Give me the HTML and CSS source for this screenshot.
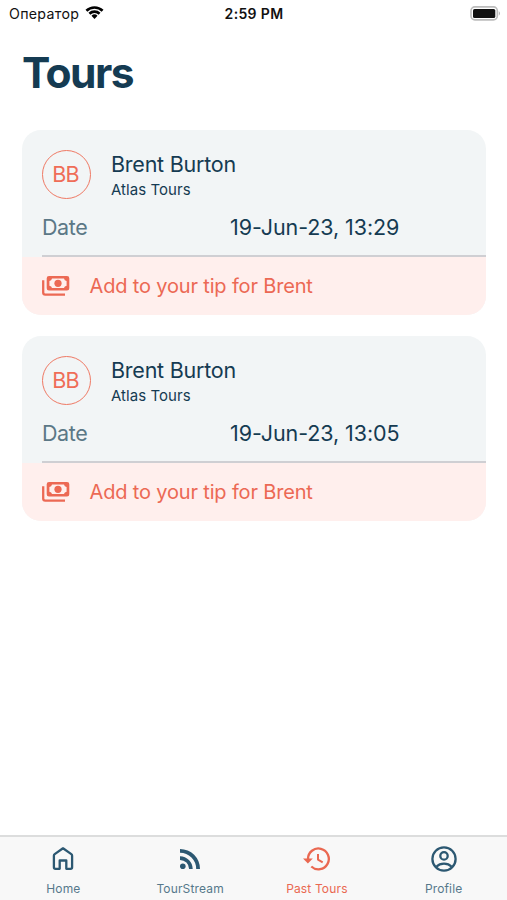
FILE: index.html
```html
<!DOCTYPE html>
<html lang="en">
<head>
<meta charset="utf-8">
<title>Tours</title>
<link rel="stylesheet" href="styles.css">
</head>
<body>
<header class="status">
  <div class="carrier"><span class="carrier-name">Оператор</span>
    <svg class="wifi" viewBox="0 0 18 14" width="19" height="14.5"><path d="M0.3 4.6 A12.6 12.6 0 0 1 17.7 4.6 L15.9 6.4 A10 10 0 0 0 2.1 6.4Z"/><path d="M3.2 7.5 A8.4 8.4 0 0 1 14.8 7.5 L13 9.3 A5.9 5.9 0 0 0 5 9.3Z"/><path d="M6.1 10.4 A4.2 4.2 0 0 1 11.9 10.4 L9 13.4Z"/></svg>
  </div>
  <time class="clock">2:59 PM</time>
  <svg class="battery" viewBox="0 0 31 15" width="31" height="15"><rect x="1" y=".9" width="26.3" height="13" rx="3.8" fill="#fff" stroke="#bcbcbc" stroke-width="1.6"/><rect x="3" y="3" width="22.3" height="9" rx="1.6"/><path d="M28.8 5 Q31 7.4 28.8 9.8Z" fill="#aaa"/></svg>
</header>
<main>
  <h1>Tours</h1>
  <article class="card">
    <div class="guide">
      <div class="avatar">BB</div>
      <div class="who"><div class="name">Brent Burton</div><div class="company">Atlas Tours</div></div>
    </div>
    <div class="date"><span class="label">Date</span><span class="value">19-Jun-23, 13:29</span></div>
    <div class="divider"></div>
    <div class="tip">
      <svg viewBox="0 0 28 20" width="28" height="20"><path class="line" d="M1.2 4.2V16.5Q1.2 18.6 3.3 18.6H23"/><path fill-rule="evenodd" d="M7 0H25Q27.3 0 27.3 2.3V12.3Q27.3 14.6 25 14.6H7Q4.7 14.6 4.7 12.3V2.3Q4.7 0 7 0ZM10 2.5Q9.6 4.6 7.4 4.9V9.7Q9.6 10 10 12.1H22Q22.4 10 24.6 9.7V4.9Q22.4 4.6 22 2.5Z"/><circle cx="16" cy="7.3" r="3.6"/></svg>
      <span>Add to your tip for Brent</span>
    </div>
  </article>
  <article class="card">
    <div class="guide">
      <div class="avatar">BB</div>
      <div class="who"><div class="name">Brent Burton</div><div class="company">Atlas Tours</div></div>
    </div>
    <div class="date"><span class="label">Date</span><span class="value">19-Jun-23, 13:05</span></div>
    <div class="divider"></div>
    <div class="tip">
      <svg viewBox="0 0 28 20" width="28" height="20"><path class="line" d="M1.2 4.2V16.5Q1.2 18.6 3.3 18.6H23"/><path fill-rule="evenodd" d="M7 0H25Q27.3 0 27.3 2.3V12.3Q27.3 14.6 25 14.6H7Q4.7 14.6 4.7 12.3V2.3Q4.7 0 7 0ZM10 2.5Q9.6 4.6 7.4 4.9V9.7Q9.6 10 10 12.1H22Q22.4 10 24.6 9.7V4.9Q22.4 4.6 22 2.5Z"/><circle cx="16" cy="7.3" r="3.6"/></svg>
      <span>Add to your tip for Brent</span>
    </div>
  </article>
</main>
<nav class="tabs">
  <a class="tab"><svg viewBox="0 0 28 28" width="28" height="28"><path class="line" d="M4.9 10.7Q4.9 9.7 5.7 9.1L14 3.3L22.3 9.1Q23.1 9.7 23.1 10.7V22.2Q23.1 23.8 21.5 23.8H17.3V15.5H10.7V23.8H6.5Q4.9 23.8 4.9 22.2Z"/></svg><span>Home</span></a>
  <a class="tab"><svg viewBox="0 0 28 28" width="28" height="28"><circle cx="6.8" cy="21.3" r="2.8"/><path d="M4 11.3A12.8 12.8 0 0 1 16.7 24H13.1A9.1 9.1 0 0 0 4 14.9Z"/><path d="M4 4A20 20 0 0 1 24 24H20.2A16.2 16.2 0 0 0 4 7.8Z"/></svg><span>TourStream</span></a>
  <a class="tab active"><svg viewBox="0 0 28 28" width="28" height="28"><path class="line" d="M5 15V14A10.4 10.4 0 1 1 8.3 21.5"/><path d="M0 13.4H9.8L4.9 18.6Z"/><path class="line thin" d="M15 9V14.6L19.7 17.3"/></svg><span>Past Tours</span></a>
  <a class="tab"><svg viewBox="0 0 28 28" width="28" height="28"><circle class="line" cx="14" cy="14" r="11.6"/><circle class="line" cx="14" cy="10.9" r="3.7"/><path class="line" d="M6.3 21.8Q9.4 18.7 14 18.7T21.7 21.8"/></svg><span>Profile</span></a>
</nav>
</body>
</html>
```
FILE: styles.css
```css
* { box-sizing: border-box; }
body { margin: 0; width: 507px; height: 900px; display: flex; flex-direction: column; background: #fff; color: #153b52; font-family: Inter, "Liberation Sans", sans-serif; overflow: hidden; white-space: nowrap; }
svg { display: block; flex: none; fill: currentColor; }
.line { fill: none; stroke: currentColor; stroke-width: 2.3; stroke-linejoin: round; }
.thin { stroke-width: 2; }
.status { height: 27px; display: grid; grid-template-columns: 1fr auto 1fr; align-items: center; padding: 0 6px 0 9px; color: #111; }
.carrier { display: flex; align-items: center; gap: 6px; }
.carrier-name { font-size: 14.2px; letter-spacing: .3px; }
.wifi { margin-top: -3px; color: #000; }
.clock { margin-right: 2px; font-size: 14px; font-weight: 600; letter-spacing: .35px; }
.battery { justify-self: end; margin-top: -1px; }
main { flex: 1; padding: 0 21px 0 22px; }
h1 { margin: 0; height: 103px; padding-top: 19px; font-size: 42.5px; line-height: 54px; font-weight: 700; letter-spacing: -1.55px; }
.card { height: 185px; margin-bottom: 21px; border-radius: 19px; overflow: hidden; background: #f2f5f6; }
.guide { display: flex; gap: 20px; height: 81px; padding: 20px 20px 0; }
.avatar { width: 49px; height: 49px; padding: 0 2px 2px 0; border: 1.5px solid #ef7964; border-radius: 50%; display: flex; align-items: center; justify-content: center; color: #ef6d58; font-size: 21.5px; letter-spacing: -.7px; }
.name { font-size: 21.5px; line-height: 30px; letter-spacing: -.23px; margin-top: -1px; }
.company { margin-top: 1px; font-size: 15px; line-height: 20px; letter-spacing: .05px; }
.date { display: grid; grid-template-columns: 188px 1fr; height: 44px; padding: 0 20px; font-size: 21.5px; line-height: 32px; }
.label { color: #5b7886; letter-spacing: -.4px; }
.value { letter-spacing: -.08px; }
.divider { height: 2px; margin-left: 20px; background: #cfcfd3; }
.tip { display: flex; align-items: center; gap: 19.5px; height: 58px; padding-left: 20px; background: #ffefed; color: #ec6954; font-size: 20px; letter-spacing: -.16px; }
.tabs { display: flex; height: 65px; border-top: 2px solid #dcdddd; background: #f8f8f8; }
.tab { flex: 1; display: flex; flex-direction: column; align-items: center; padding-top: 8px; color: #2c5872; font-size: 12px; line-height: 16px; letter-spacing: .15px; }
.tab span { margin-top: 8px; color: #56788b; }
.tab.active, .tab.active span { color: #ea6851; }
```
